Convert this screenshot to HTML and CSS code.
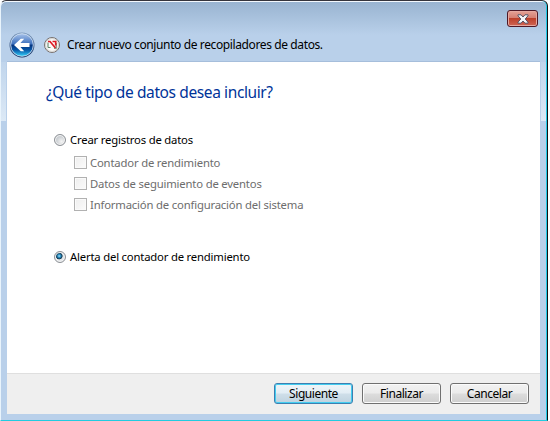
FILE: index.html
```html
<!DOCTYPE html>
<html lang="es">
<head>
<meta charset="utf-8">
<title>Crear nuevo conjunto de recopiladores de datos</title>
<link rel="stylesheet" href="styles.css">
</head>
<body>
<div class="window">
  <header class="titlebar">
    <button class="close" aria-label="Cerrar">
      <svg width="12" height="10" viewBox="0 0 12 10"><path d="M1 .8h3L6 3 8 .8h3v1L8.200 5 11 8.200v1H8L6 7 4 9.200H1v-1L3.800 5 1 1.800z" fill="#f5f5f7" stroke="#555366" stroke-width="1"/></svg>
    </button>
    <div class="heading">
      <svg class="back" width="26" height="26" viewBox="0 0 26 26">
        <defs>
          <linearGradient id="rim" x2="0" y2="1"><stop stop-color="#7d9abd"/><stop offset="1" stop-color="#112e62"/></linearGradient>
          <linearGradient id="orb" x2="0" y2="1"><stop stop-color="#a7c2ea"/><stop offset=".46" stop-color="#3d70bd"/><stop offset=".5" stop-color="#07357f"/><stop offset=".72" stop-color="#0757a8"/><stop offset="1" stop-color="#35d3fb"/></linearGradient>
        </defs>
        <circle cx="13" cy="13" r="12.500" fill="url(#rim)"/>
        <circle cx="13" cy="13" r="11.300" fill="url(#orb)" stroke="#d9e8f8" stroke-width=".8"/>
        <path d="M5 13l6.800-6.200h3.400L11.400 11H20.500v4h-9.100l3.800 4.200h-3.400z" fill="#fff"/>
      </svg>
      <svg class="monitor" width="16" height="16" viewBox="0 0 16 16">
        <circle cx="8" cy="8" r="7.500" fill="#fbfbfa" stroke="#77716f"/>
        <circle cx="8" cy="8" r="6.400" fill="none" stroke="#c9c8c4" stroke-width=".8"/>
        <path d="M4 10.500V5.500M4 10.500h2.500M12.200 6v5.300H10" fill="none" stroke="#62886e" stroke-width="1.100"/>
        <path d="M4 4.500h2l5.500 6.500M8.500 4.500h3.200v4" fill="none" stroke="#df1b26" stroke-width="1.700"/>
      </svg>
      <span class="caption">Crear nuevo conjunto de recopiladores de datos.</span>
    </div>
  </header>
  <main class="client">
    <section class="content">
      <h1><span class="question">¿Qué tipo de datos desea incluir?</span></h1>
      <div class="option"><i class="radio"></i><span class="create">Crear registros de datos</span></div>
      <div class="checks">
        <div class="check"><i class="box"></i><span class="counter">Contador de rendimiento</span></div>
        <div class="check"><i class="box"></i><span class="events">Datos de seguimiento de eventos</span></div>
        <div class="check"><i class="box"></i><span class="config">Información de configuración del sistema</span></div>
      </div>
      <div class="option"><i class="radio selected"></i><span class="alert">Alerta del contador de rendimiento</span></div>
    </section>
    <footer class="actions">
      <button class="btn primary"><span>Siguiente</span></button>
      <button class="btn"><span>Finalizar</span></button>
      <button class="btn"><span>Cancelar</span></button>
    </footer>
  </main>
</div>
</body>
</html>
```
FILE: styles.css
```css
* { box-sizing: border-box; }
body { margin: 0; background: #fff; font: 11.3px/16px "Noto Sans", "Open Sans", sans-serif; color: #000; overflow: hidden; }
span { white-space: nowrap; }
button { font: inherit; padding: 0; }
.window {
  width: 548px; height: 421px; padding: 0 6px 0 6px;
  border: 1px solid #111; border-top-color: #35343c; border-left-color: #e9f4fc; border-bottom-color: #22cbe0;
  border-radius: 6px 6px 0 0;
  box-shadow: inset -1px 0 #20cbe8, inset 0 1px #f3f8fd;
  background:
    linear-gradient(#c0d5ec, #dce9f6) 0 61px / 5px 59px no-repeat,
    linear-gradient(#c0d5ec, #dce9f6) 540px 61px / 5px 59px no-repeat,
    linear-gradient(#98b3d0 0, #b9d0ea 34px, #b9d0ea 100%);
}
.titlebar { height: 60px; padding-top: 9px; }
.close {
  display: flex; align-items: center; justify-content: center;
  width: 31px; height: 17px; margin: 0 2px 0 auto;
  position: relative; left: -1px;
  border: 1px solid #4e1826; border-radius: 3px;
  box-shadow: inset 0 0 0 1px #e5a8a0;
  background: linear-gradient(#e5a297, #d47d70 48%, #bd402b 50%, #cf6553);
}
.heading { display: flex; align-items: center; height: 26px; margin: 5px 0 0 2px; }
.monitor { margin-left: 9px; }
.caption { margin-left: 7px; font-size: 12px; letter-spacing: -.385px; }
.client { height: 353px; width: 533px; border-top: 1px solid #a6bedb; background: #fff; display: flex; flex-direction: column; }
.content { height: 311px; padding: 18px 0 0 39px; }
h1 { margin: 0; height: 26px; font-size: 15.500px; line-height: 24px; font-weight: 400; color: #039; letter-spacing: -.39px; }
.option { display: flex; align-items: center; height: 16px; margin: 26px 0 0 8px; letter-spacing: -.19px; }
.radio { width: 12px; height: 12px; margin-right: 4px; border: 1px solid #8c9095; border-radius: 50%; background: radial-gradient(circle at 65% 65%, #f4f4f4, #cbcfd3 5px); box-shadow: inset 0 0 0 1px #f6f6f6; }
.radio.selected { background: radial-gradient(circle at 42% 40%, #a9e6fc 0, #2c8fc2 1.500px, #13374f 3px, #e3e7ea 3.700px); }
.checks { padding: 4px 0 0 28px; height: 75px; color: #6d6d6d; letter-spacing: -.18px; }
.check { display: flex; align-items: center; height: 21px; }
.box { width: 13px; height: 13px; margin-right: 3px; border: 1px solid #b1b1b1; background: linear-gradient(135deg, #eee, #fbfbfb); box-shadow: inset 0 0 0 1px #fafafa; }
.actions { display: flex; justify-content: flex-end; gap: 9px; height: 41px; padding: 9px 11px 0 0; border-top: 1px solid #dfdfdf; background: #efefef; font-size: 12px; letter-spacing: -.45px; }
.btn { letter-spacing: inherit; width: 79px; height: 21px; border: 1px solid #707070; border-radius: 3px; box-shadow: inset 0 0 0 1px #fbfbfb; background: linear-gradient(#f2f2f2, #ebebeb 49%, #ddd 51%, #cfcfcf); color: #000; line-height: 18px; }
.primary { border-color: #3c7fb1; box-shadow: inset 0 0 0 1px #43cdf0; background: linear-gradient(#eef5f9, #e2edf4 49%, #cfdfe9 51%, #bfd2df); }
```
